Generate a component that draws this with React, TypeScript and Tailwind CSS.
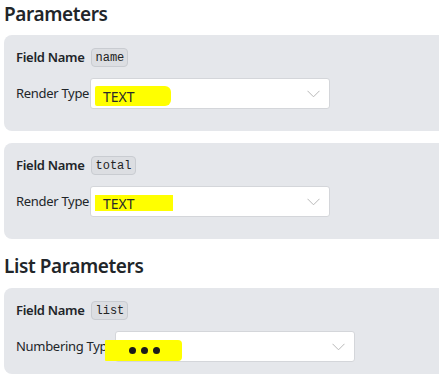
import React from "react";

const font = { fontFamily: '"Segoe UI", "Noto Sans", "Open Sans", sans-serif' };

function Chevron() {
  return (
    <svg width="13" height="8" viewBox="0 0 13 8" className="absolute right-[9px] top-[11px]">
      <path d="M0.5 0.8 L6.5 6.8 L12.5 0.8" fill="none" stroke="#b8b8b8" strokeWidth="1" />
    </svg>
  );
}

function Badge({ children }: { children: React.ReactNode }) {
  return (
    <span
      className="inline-flex h-[19px] items-center rounded-[4px] border border-[#c9ccd1] bg-[#dcdee2] px-[3px] text-[12px] tracking-normal text-[#222]"
      style={{ fontFamily: '"Liberation Mono", "DejaVu Sans Mono", monospace' }}
    >
      {children}
    </span>
  );
}

function Select({ hl }: { hl: React.ReactNode }) {
  return (
    <div className="relative h-[31px] w-[240px] shrink-0 rounded-[3px] border border-[#d4d6da] bg-white">
      {hl}
      <Chevron />
    </div>
  );
}

function TextHighlight({ rect }: { rect?: boolean }) {
  return (
    <div
      className={
        rect
          ? "absolute left-[4px] top-[8px] flex h-[16px] w-[78px] items-center bg-[#ffff00] pl-[8px] text-[14px] text-[#2a2a2a]"
          : "absolute left-[4px] top-[7px] flex h-[20px] w-[76px] items-center rounded-r-[6px] rounded-l-[2px] bg-[#ffff00] pl-[8px] text-[14px] text-[#2a2a2a]"
      }
    >
      TEXT
    </div>
  );
}

function FieldRow({ name }: { name: string }) {
  return (
    <div className="flex h-[19px] items-center gap-[7px]">
      <span className="text-[13px] font-semibold leading-[19px] tracking-[-0.3px]">Field Name</span>
      <Badge>{name}</Badge>
    </div>
  );
}

export default function App() {
  return (
    <div className="h-[392px] w-[439px] overflow-hidden bg-white text-[#212529]" style={font}>
      <div className="pl-[4px]">
        <h2 className="pt-[2px] text-[19px] font-semibold leading-[24px] tracking-[-0.4px] text-[#212529]">Parameters</h2>
        <div className="mt-[9px] flex w-[470px] flex-col gap-[12px]">
          <div className="rounded-[8px] bg-[#e5e7eb] pb-[22px] pl-[12px] pt-[13px]">
            <FieldRow name="name" />
            <div className="mt-[11px] flex items-center">
              <span className="w-[74px] text-[13px] tracking-[-0.3px]">Render Type</span>
              <Select hl={<TextHighlight />} />
            </div>
          </div>
          <div className="rounded-[8px] bg-[#e5e7eb] pb-[22px] pl-[12px] pt-[13px]">
            <FieldRow name="total" />
            <div className="mt-[11px] flex items-center">
              <span className="w-[74px] text-[13px] tracking-[-0.3px]">Render Type</span>
              <Select hl={<TextHighlight rect />} />
            </div>
          </div>
        </div>
        <h2 className="mt-[15px] text-[19px] font-semibold leading-[24px] tracking-[-0.4px] text-[#212529]">List Parameters</h2>
        <div className="mt-[10px] w-[470px] rounded-[8px] bg-[#e5e7eb] pb-[12px] pl-[12px] pt-[13px]">
          <FieldRow name="list" />
          <div className="relative mt-[11px] flex items-center">
            <span className="w-[99px] whitespace-nowrap text-[13px] tracking-[-0.3px]">Numbering Type</span>
            <Select hl={null} />
            <div className="absolute left-[89px] top-[9px] flex h-[21px] w-[77px] items-center gap-[5px] rounded-r-[4px] rounded-l-[1px] bg-[#ffff00] pl-[24px]">
              <span className="h-[7px] w-[7px] rounded-full bg-[#1a1a1a]" />
              <span className="h-[7px] w-[7px] rounded-full bg-[#1a1a1a]" />
              <span className="h-[7px] w-[7px] rounded-full bg-[#1a1a1a]" />
            </div>
          </div>
        </div>
      </div>
    </div>
  );
}
